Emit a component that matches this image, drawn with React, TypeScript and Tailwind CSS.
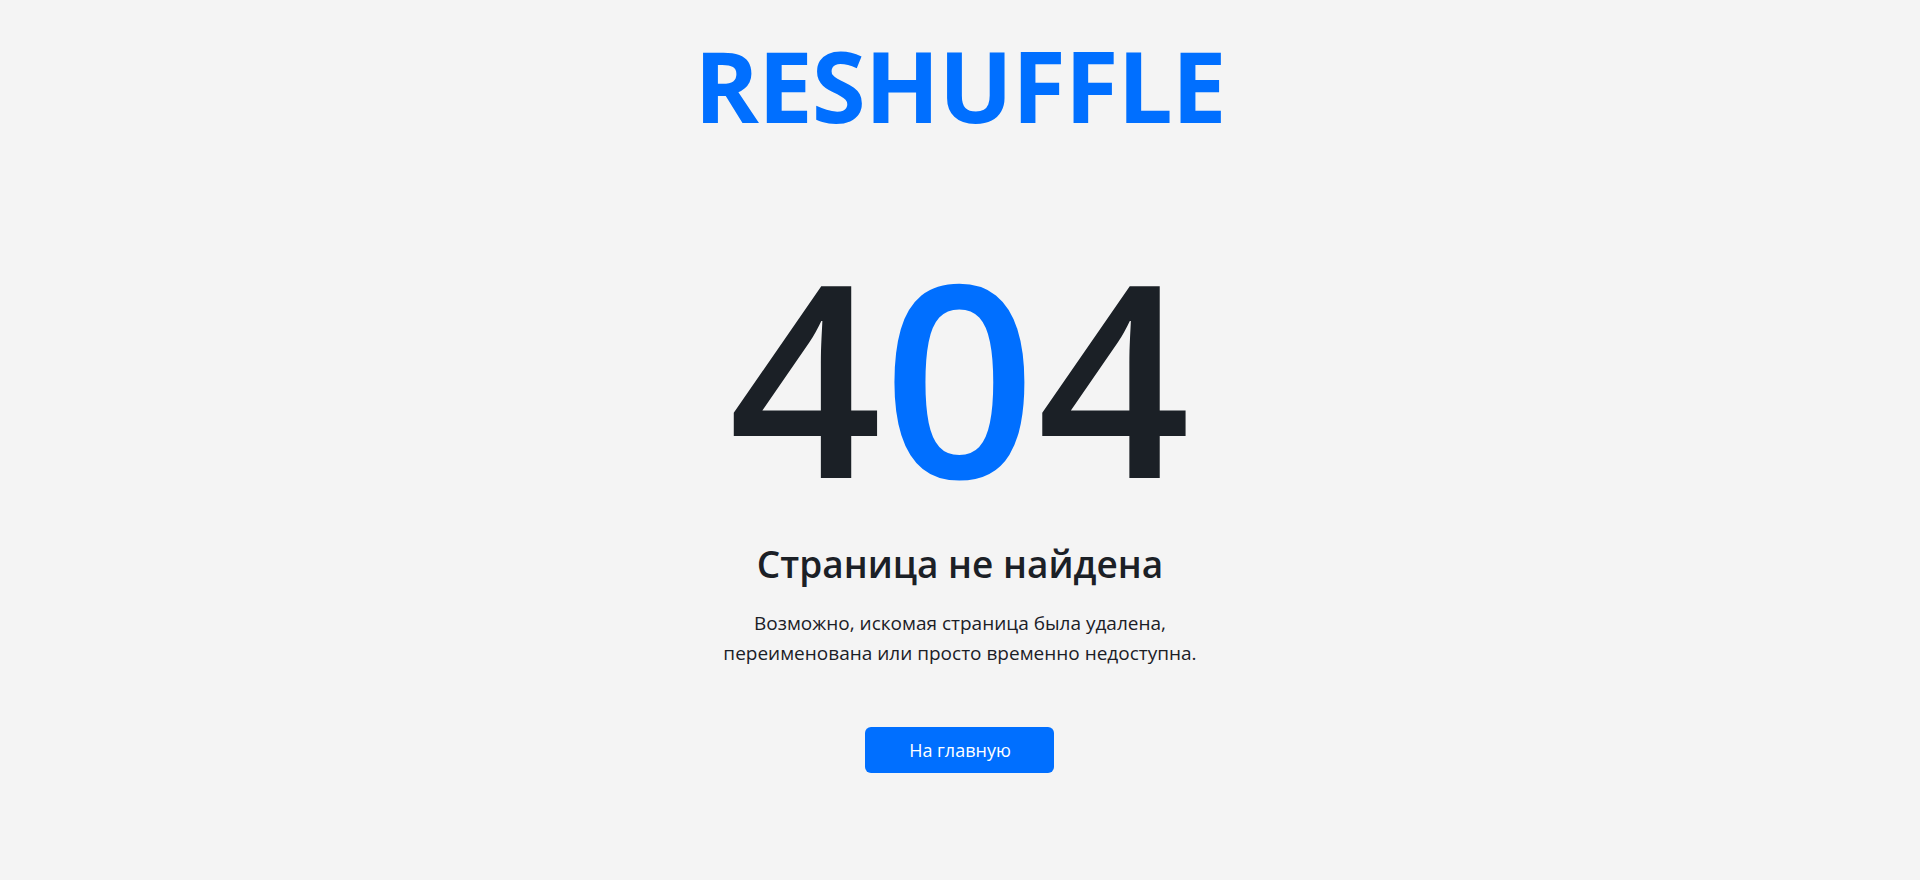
import React from 'react';

export default function App() {
  return (
    <div className="min-h-screen h-[880px] bg-[#f4f4f4] flex flex-col items-center font-['Open_Sans','Noto_Sans',sans-serif] text-[#1b2026]">
      {/* Logo */}
      <header className="pt-[30px]">
        <h1 className="text-[98px] leading-[110px] font-bold tracking-[-1px] text-[#006fff]">RESHUFFLE</h1>
      </header>

      <main className="flex flex-col items-center mt-[101px] text-center">
        <div className="text-[268px] leading-[268px] font-semibold tracking-[1px]">
          4<span className="text-[#006fff]">0</span>4
        </div>
        <h2 className="mt-[31px] text-[37px] leading-[48px] font-semibold">Страница не найдена</h2>
        <p className="mt-[20px] text-[19px] leading-[30px]">
          Возможно, искомая страница была удалена,
          <br />
          переименована или просто временно недоступна.
        </p>
        <a
          href="#"
          className="mt-[59px] w-[189px] h-[46px] flex items-center justify-center rounded-md bg-[#006fff] text-white text-[18px] hover:bg-[#0060dd]"
        >
          На главную
        </a>
      </main>
    </div>
  );
}
